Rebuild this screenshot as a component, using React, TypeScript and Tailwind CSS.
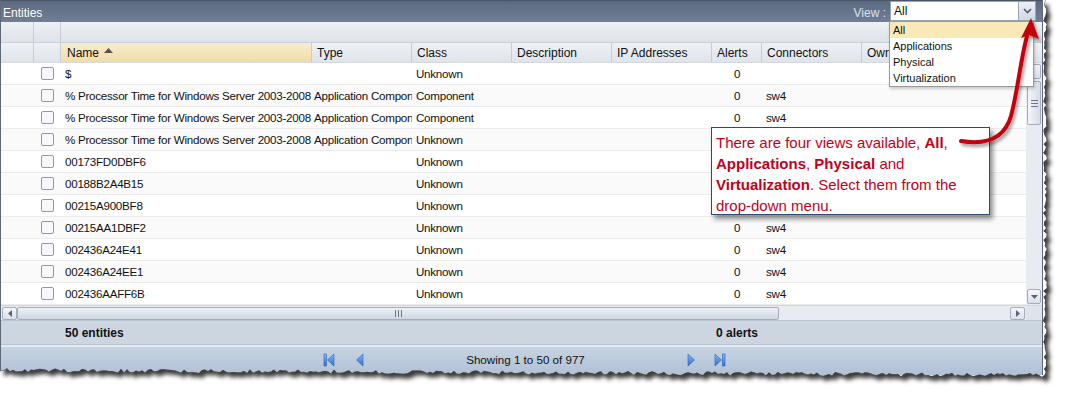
import React from 'react';

type Row = {
  name: string;
  type?: string;
  cls: string;
  alerts?: string;
  conn?: string;
};

const PROC = '% Processor Time for Windows Server 2003-2008';

// rows 4-7 sit under the callout, their alert/connector cells are hidden
const rows: Row[] = [
  { name: '$', cls: 'Unknown', alerts: '0' },
  { name: PROC, type: 'Application Component', cls: 'Component', alerts: '0', conn: 'sw4' },
  { name: PROC, type: 'Application Component', cls: 'Component', alerts: '0', conn: 'sw4' },
  { name: PROC, type: 'Application Component', cls: 'Unknown' },
  { name: '00173FD0DBF6', cls: 'Unknown' },
  { name: '00188B2A4B15', cls: 'Unknown' },
  { name: '00215A900BF8', cls: 'Unknown' },
  { name: '00215AA1DBF2', cls: 'Unknown', alerts: '0', conn: 'sw4' },
  { name: '002436A24E41', cls: 'Unknown', alerts: '0', conn: 'sw4' },
  { name: '002436A24EE1', cls: 'Unknown', alerts: '0', conn: 'sw4' },
  { name: '002436AAFF6B', cls: 'Unknown', alerts: '0', conn: 'sw4' },
];

const headers = [
  { label: 'Type', w: 'w-[100px]' },
  { label: 'Class', w: 'w-[100px]' },
  { label: 'Description', w: 'w-[100px]' },
  { label: 'IP Addresses', w: 'w-[100px]' },
  { label: 'Alerts', w: 'w-[50px]' },
  { label: 'Connectors', w: 'w-[100px]' },
];

function rand(i: number) {
  const v = Math.sin(i * 12.9898 + 4.1) * 43758.5453;
  return v - Math.floor(v);
}

function tornPath() {
  let d = 'M0 0 L1045 0';
  let k = 0;
  for (let y = 3; y <= 372; y += 3) {
    d += ` L${(1045 + (rand(k++) - 0.5) * 4).toFixed(1)} ${y}`;
  }
  for (let x = 1045; x >= 0; x -= 3) {
    const base = 370 + (x / 1045) * 5;
    d += ` L${x} ${(base + (rand(k++) - 0.5) * 4).toFixed(1)}`;
  }
  return d + ' L0 371 Z';
}

function TornEdge() {
  const inner = tornPath();
  return (
    <svg className="pointer-events-none absolute inset-0" width={1066} height={393}>
      <defs>
        <clipPath id="outside">
          <path d={`M0 0 H1066 V393 H0 Z ${inner}`} clipRule="evenodd" />
        </clipPath>
        <filter id="blur" x="-5%" y="-5%" width="110%" height="110%">
          <feGaussianBlur stdDeviation="2.2" />
        </filter>
      </defs>
      <path d={`M0 0 H1066 V393 H0 Z ${inner}`} fill="#fff" fillRule="evenodd" />
      <g clipPath="url(#outside)">
        <path d={inner} transform="translate(4 5)" fill="#3a3a3a" filter="url(#blur)" />
        <path d={inner} fill="none" stroke="#555" strokeWidth="1" />
      </g>
    </svg>
  );
}

function Checkbox() {
  return <div className="h-[13px] w-[13px] rounded-[2px] border border-[#8e9aab] bg-[#f6f8fb]" />;
}

function PagerIcon({ kind }: { kind: 'first' | 'prev' | 'next' | 'last' }) {
  const flip = kind === 'next' || kind === 'last';
  const bar = kind === 'first' || kind === 'last';
  return (
    <svg width="12" height="14" viewBox="0 0 12 14" className={flip ? '-scale-x-100' : ''}>
      <defs>
        <linearGradient id={`pg-${kind}`} x1="0" y1="0" x2="0" y2="1">
          <stop offset="0" stopColor="#8ab8f0" />
          <stop offset="1" stopColor="#2d6fd0" />
        </linearGradient>
      </defs>
      {bar && <rect x="1" y="1" width="2.5" height="12" fill={`url(#pg-${kind})`} stroke="#2a62b8" strokeWidth="0.6" />}
      <path
        d={bar ? 'M11 1 L4.5 7 L11 13 Z' : 'M9 1 L2.5 7 L9 13 Z'}
        fill={`url(#pg-${kind})`}
        stroke="#2a62b8"
        strokeWidth="0.6"
      />
    </svg>
  );
}

function CalloutArrow() {
  return (
    <svg className="pointer-events-none absolute inset-0" width={1066} height={393}>
      <defs>
        <filter id="ash" x="-20%" y="-20%" width="140%" height="140%">
          <feDropShadow dx="2" dy="3" stdDeviation="1.5" floodColor="#000" floodOpacity="0.35" />
        </filter>
      </defs>
      <g filter="url(#ash)">
        <path
          d="M961 141 C 985 145, 1004 140, 1011 116 C 1018 90, 1020 62, 1027 36"
          fill="none"
          stroke="#c4000f"
          strokeWidth="4"
          strokeLinecap="round"
        />
        <path d="M1031 18 L1039 39 L1029 35 L1021 38 Z" fill="#c4000f" />
      </g>
    </svg>
  );
}

export default function App() {
  return (
    <div className="relative h-[393px] w-[1066px] overflow-hidden bg-white font-['Liberation_Sans',Arial,sans-serif] text-[11.6px] text-[#111]">
      <div className="w-[1043px] border-x border-[#5d6878] bg-white">
        {/* title bar */}
        <div className="flex h-[22px] items-start justify-between border-t border-[#4a5568] bg-gradient-to-b from-[#5a6981] to-[#717f96] pr-[6px]">
          <span className="pl-[2px] pt-[3px] text-[12px] text-white">Entities</span>
          <div className="flex items-start">
            <span className="pr-[4px] pt-[3px] text-[12px] text-[#dce2ea]">View :</span>
            <div className="flex h-[20px] w-[129px] items-center border border-[#9aa5b3] bg-white pl-[3px] text-[12px]">All</div>
            <div className="flex h-[20px] w-[17px] items-center justify-center border border-l-0 border-[#9aa5b3] bg-gradient-to-b from-[#eef2f7] to-[#cfd8e4]">
              <svg width="9" height="6" viewBox="0 0 9 6">
                <path d="M1 1 L4.5 4.5 L8 1" fill="none" stroke="#4a5a75" strokeWidth="1.6" />
              </svg>
            </div>
          </div>
        </div>

        {/* header band */}
        <div className="flex h-[21px] border-b border-[#cbd2dc] bg-gradient-to-b from-[#eef1f5] to-[#dde2e9]">
          <div className="w-[33px] border-r border-[#c6cdd7]" />
          <div className="w-[27px] border-r border-[#c6cdd7]" />
          <div className="flex-1" />
        </div>

        {/* column headers */}
        <div className="flex h-[20px] border-b border-[#d4d9e0] bg-gradient-to-b from-[#eef1f5] to-[#dfe4ea] text-[12px]">
          <div className="w-[33px] border-r border-[#c6cdd7]" />
          <div className="w-[27px] border-r border-[#c6cdd7]" />
          <div className="flex w-[251px] items-center gap-[5px] border-r border-[#d6cdb5] bg-gradient-to-b from-[#f9edcf] to-[#f1dca6] pl-[6px]">
            <span>Name</span>
            <svg width="9" height="5" viewBox="0 0 9 5" className="mb-[4px]">
              <path d="M0 5 L4.5 0 L9 5 Z" fill="#555" />
            </svg>
          </div>
          {headers.map((h) => (
            <div key={h.label} className={`flex items-center border-r border-[#c6cdd7] pl-[5px] ${h.w}`}>
              {h.label}
            </div>
          ))}
          <div className="flex flex-1 items-center pl-[5px]">Owner</div>
        </div>

        {/* body */}
        <div className="flex h-[242px]">
          <div className="w-[1025px] tracking-[-0.25px]">
            {rows.map((r, i) => (
              <div
                key={i}
                className={`flex h-[22px] items-center border-b border-[#ececec] ${i % 2 === 1 ? 'bg-[#fafafa]' : 'bg-white'}`}
              >
                <div className="w-[33px]" />
                <div className="flex w-[27px] justify-center">
                  <Checkbox />
                </div>
                <div className="w-[251px] overflow-hidden whitespace-nowrap pl-[4px]">{r.name}</div>
                <div className="w-[100px] overflow-hidden whitespace-nowrap pl-[2px]">{r.type ?? ''}</div>
                <div className="w-[100px] pl-[4px]">{r.cls}</div>
                <div className="w-[100px]" />
                <div className="w-[100px]" />
                <div className="w-[50px] text-center">{r.alerts ?? ''}</div>
                <div className="w-[100px] pl-[4px]">{r.conn ?? ''}</div>
              </div>
            ))}
          </div>
          {/* vertical scrollbar */}
          <div className="flex w-[16px] flex-col items-center bg-[#e8ecf2] py-[1px]">
            <div className="h-[15px] w-[14px] rounded-[2px] border border-[#a3adbb] bg-gradient-to-b from-[#f4f6f9] to-[#dbe1e9]" />
            <div className="mt-[2px] flex h-[44px] w-[14px] items-center justify-center rounded-[2px] border border-[#a3adbb] bg-gradient-to-r from-[#f4f6f9] to-[#d6dde7]">
              <div className="flex flex-col gap-[2px]">
                <div className="h-px w-[7px] bg-[#6b7789]" />
                <div className="h-px w-[7px] bg-[#6b7789]" />
                <div className="h-px w-[7px] bg-[#6b7789]" />
              </div>
            </div>
            <div className="flex-1" />
            <div className="flex h-[15px] w-[14px] items-center justify-center rounded-[2px] border border-[#a3adbb] bg-gradient-to-b from-[#f4f6f9] to-[#dbe1e9]">
              <svg width="7" height="4" viewBox="0 0 7 4">
                <path d="M0 0 L7 0 L3.5 4 Z" fill="#5a6578" />
              </svg>
            </div>
          </div>
        </div>

        {/* horizontal scrollbar */}
        <div className="flex h-[15px] border-t border-[#d0d6de]">
          <div className="flex w-[1025px] items-center bg-[#e8ecf2] px-[1px]">
            <div className="flex h-[13px] w-[15px] items-center justify-center rounded-[2px] border border-[#a3adbb] bg-gradient-to-b from-[#f4f6f9] to-[#dbe1e9]">
              <svg width="4" height="7" viewBox="0 0 4 7">
                <path d="M4 0 L4 7 L0 3.5 Z" fill="#5a6578" />
              </svg>
            </div>
            <div className="flex h-[13px] w-[762px] items-center justify-center rounded-[2px] border border-[#a3adbb] bg-gradient-to-b from-[#eef1f6] to-[#cfd7e2]">
              <div className="flex gap-[2px]">
                <div className="h-[7px] w-px bg-[#6b7789]" />
                <div className="h-[7px] w-px bg-[#6b7789]" />
                <div className="h-[7px] w-px bg-[#6b7789]" />
              </div>
            </div>
            <div className="flex-1" />
            <div className="flex h-[13px] w-[15px] items-center justify-center rounded-[2px] border border-[#a3adbb] bg-gradient-to-b from-[#f4f6f9] to-[#dbe1e9]">
              <svg width="4" height="7" viewBox="0 0 4 7">
                <path d="M0 0 L0 7 L4 3.5 Z" fill="#5a6578" />
              </svg>
            </div>
          </div>
          <div className="w-[16px] bg-[#dfe4ea]" />
        </div>

        {/* summary */}
        <div className="flex h-[25px] items-center border-y border-[#b9c4d1] bg-[#cdd6e0] text-[12px] font-bold">
          <div className="w-[60px]" />
          <div className="w-[651px] pl-[4px]">50 entities</div>
          <div className="w-[50px] text-center">0 alerts</div>
        </div>

        {/* pager */}
        <div className="flex h-[30px] items-center border-t-[2px] border-[#e4eaf1] bg-gradient-to-b from-[#c7d3e1] to-[#b0c1d5] pb-[2px]">
          <div className="w-[322px]" />
          <PagerIcon kind="first" />
          <div className="w-[19px]" />
          <PagerIcon kind="prev" />
          <div className="flex w-[319px] justify-center">Showing 1 to 50 of 977</div>
          <PagerIcon kind="next" />
          <div className="w-[17px]" />
          <PagerIcon kind="last" />
        </div>
      </div>

      {/* dropdown list */}
      <div className="absolute left-[889px] top-[21px] w-[145px] border border-[#9a9a9a] bg-white text-[11px] shadow-[1px_2px_3px_rgba(0,0,0,0.2)]">
        <div className="flex h-[16px] items-center bg-[#f9e9b6] pl-[3px]">All</div>
        <div className="flex h-[16px] items-center pl-[3px]">Applications</div>
        <div className="flex h-[16px] items-center pl-[3px]">Physical</div>
        <div className="flex h-[16px] items-center pl-[3px]">Virtualization</div>
      </div>

      {/* callout */}
      <div className="absolute left-[711px] top-[127px] h-[88px] w-[279px] border border-[#2d4a78] bg-white px-[4px] pt-[4px] text-[15px] leading-[21px] text-[#c3001b] shadow-[3px_4px_5px_rgba(0,0,0,0.45)]">
        There are four views available, <b>All</b>, <b>Applications</b>, <b>Physical</b> and{' '}
        <b>Virtualization</b>. Select them from the drop-down menu.
      </div>

      <CalloutArrow />
      <TornEdge />
    </div>
  );
}
